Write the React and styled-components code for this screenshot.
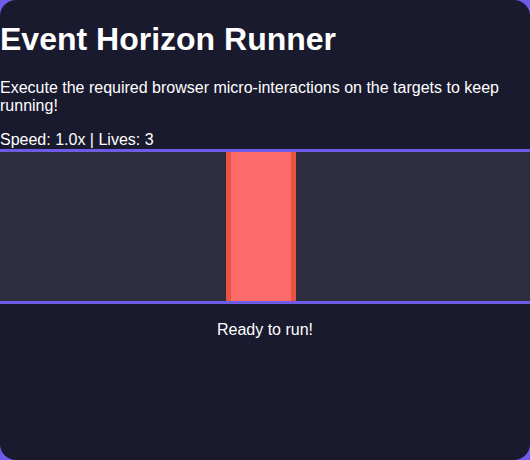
import React, { useState } from "react";
import styled, { createGlobalStyle } from "styled-components";

const GlobalStyle = createGlobalStyle`
  html, body {
    margin: 0;
    padding: 0;
    background: #6c5ce7;
  }
  body {
    font-family: "Liberation Sans", Arial, sans-serif;
  }
`;

const Game = styled.div`
  display: flow-root;
  width: 530px;
  height: 460px;
  box-sizing: border-box;
  background: #1a1a2e;
  color: #ffffff;
  border-radius: 16px;
  overflow: hidden;
`;

const Title = styled.h1`
  font-size: 32px;
  font-weight: bold;
  margin: 21px 0;
`;

const Intro = styled.p`
  font-size: 16px;
  margin: 16px 0;
`;

const Stats = styled.div`
  font-size: 16px;
  margin-top: 16px;
`;

const Track = styled.div`
  position: relative;
  height: 149px;
  background: #2c2d3f;
  border-top: 3px solid #6c5ce7;
  border-bottom: 3px solid #6c5ce7;
`;

// obstacle sits on the track, its place is part of the game state
const Obstacle = styled.div`
  position: absolute;
  top: 0;
  bottom: 0;
  width: 60px;
  background: #ff6b6b;
  border-left: 5px solid #e8543f;
  border-right: 5px solid #e8543f;
`;

const Status = styled.div`
  text-align: center;
  font-size: 16px;
  margin-top: 17px;
`;

const App = () => {
  const [speed] = useState(1.0);
  const [lives] = useState(3);
  const [obstacleX] = useState(226);

  return (
    <>
      <GlobalStyle />
      <Game>
        <Title>Event Horizon Runner</Title>
        <Intro>
          Execute the required browser micro-interactions on the targets to
          keep running!
        </Intro>
        <Stats>
          Speed: {speed.toFixed(1)}x | Lives: {lives}
        </Stats>
        <Track>
          <Obstacle style={{ left: obstacleX }} />
        </Track>
        <Status>Ready to run!</Status>
      </Game>
    </>
  );
};

export default App;
